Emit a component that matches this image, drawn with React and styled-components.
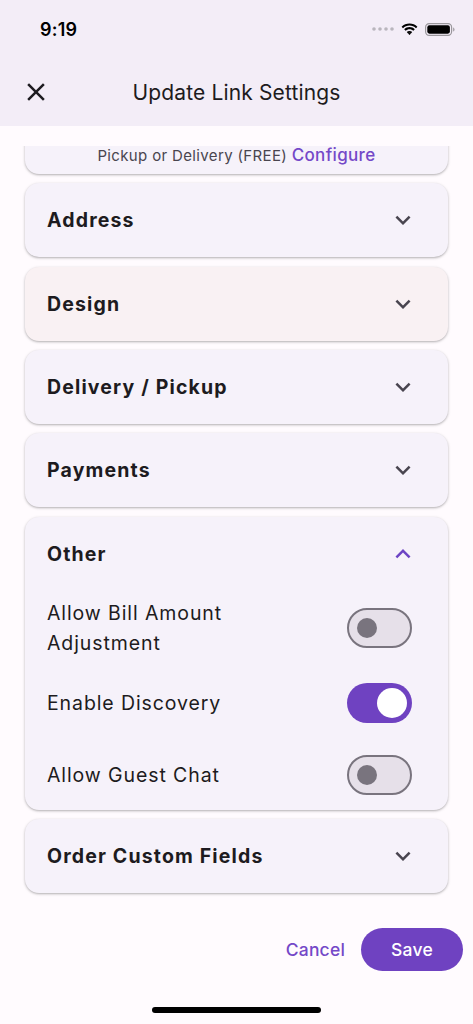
import React, { useState } from "react";
import styled, { createGlobalStyle } from "styled-components";

const GlobalStyle = createGlobalStyle`
  body {
    margin: 0;
    background: #fffbfe;
    font-family: Inter, "Noto Sans", sans-serif;
    color: #1d1b20;
  }
`;

const Screen = styled.div`
  width: 473px;
  height: 1024px;
  display: flex;
  flex-direction: column;
  overflow: hidden;
  background: #fffbfe;
`;

const Top = styled.header`
  background: #f3edf7;
`;

const StatusBar = styled.div`
  height: 58px;
  display: flex;
  align-items: center;
  justify-content: space-between;
  padding: 0 18px 0 40px;
`;

const Time = styled.span`
  font-size: 18px;
  font-weight: 600;
  letter-spacing: 0.2px;
  color: #000;
`;

const StatusIcons = styled.div`
  display: flex;
  align-items: center;
  gap: 7px;
`;

const AppBar = styled.div`
  height: 68px;
  display: flex;
  align-items: center;
  position: relative;
  padding-left: 21px;
`;

const IconButton = styled.button`
  width: 30px;
  height: 30px;
  padding: 0;
  border: 0;
  background: none;
  display: flex;
  align-items: center;
  justify-content: center;
  color: #1d1b20;
`;

const Title = styled.h1`
  position: absolute;
  left: 0;
  right: 0;
  margin: 0;
  text-align: center;
  font-size: 21px;
  font-weight: 400;
  letter-spacing: 0.15px;
  pointer-events: none;
`;

const Scroll = styled.div`
  margin-top: 20px;
  overflow: hidden;
  padding: 0 25px 4px;
`;

const List = styled.div`
  margin-top: -20px;
  display: flex;
  flex-direction: column;
  gap: 9.33px;
`;

const Card = styled.section`
  background: ${(p) => (p.$tint ? "#f9f1f3" : "#f6f2fa")};
  border-radius: 14px;
  box-shadow: 0 1px 2px rgba(0, 0, 0, 0.22), 0 1px 3px 1px rgba(0, 0, 0, 0.07);
`;

const PartialCard = styled(Card)`
  padding: 21px 22px 10px;
  text-align: center;
  font-size: 15px;
  line-height: 16px;
  letter-spacing: 0.35px;
  color: #49454f;
`;

const Link = styled.span`
  color: #7448c8;
  font-weight: 500;
  font-size: 17px;
`;

const CardHead = styled.div`
  height: 74px;
  display: flex;
  align-items: center;
  justify-content: space-between;
  padding: 0 30px 0 22px;
`;

const CardTitle = styled.h2`
  margin: 0;
  font-size: 19.5px;
  font-weight: 700;
  letter-spacing: 1.15px;
`;

const Chevron = styled.svg`
  width: 30px;
  height: 30px;
  fill: ${(p) => (p.$open ? "#6d44c4" : "#49454f")};
`;

const Body = styled.div`
  padding: 2px 36px 3px 22px;
`;

const Row = styled.div`
  height: ${(p) => p.$h}px;
  display: flex;
  align-items: center;
  justify-content: space-between;
`;

const RowLabel = styled.span`
  font-size: 19.5px;
  line-height: 30px;
  letter-spacing: 0.9px;
  color: #1d1b20;
  max-width: 200px;
`;

const Track = styled.button`
  width: 65px;
  height: 40px;
  box-sizing: border-box;
  border-radius: 20px;
  border: ${(p) => (p.$on ? "0" : "2.5px solid #79747e")};
  background: ${(p) => (p.$on ? "#6f42c1" : "#e6e0e9")};
  display: flex;
  align-items: center;
  justify-content: ${(p) => (p.$on ? "flex-end" : "flex-start")};
  padding: ${(p) => (p.$on ? "0 5px" : "0 7.5px")};
`;

const Thumb = styled.span`
  width: ${(p) => (p.$on ? 30 : 20)}px;
  height: ${(p) => (p.$on ? 30 : 20)}px;
  border-radius: 50%;
  background: ${(p) => (p.$on ? "#fff" : "#79747e")};
`;

const Footer = styled.div`
  padding: 31px 10px 0 0;
  display: flex;
  justify-content: flex-end;
  align-items: center;
  gap: 16px;
`;

const TextButton = styled.button`
  border: 0;
  background: none;
  padding: 0;
  font-family: inherit;
  font-size: 17.5px;
  font-weight: 500;
  letter-spacing: 0.2px;
  color: #7448c8;
`;

const FilledButton = styled.button`
  width: 102px;
  height: 43px;
  border: 0;
  border-radius: 22px;
  background: #6f42c1;
  color: #fff;
  font-family: inherit;
  font-size: 17.5px;
  font-weight: 500;
  letter-spacing: 0.2px;
`;

const HomeBar = styled.div`
  margin: 36px auto 0;
  width: 169px;
  height: 6px;
  border-radius: 3px;
  background: #000;
`;

const Switch = ({ on, onToggle }) => (
  <Track $on={on} onClick={onToggle}>
    <Thumb $on={on} />
  </Track>
);

const ExpandIcon = ({ open }) => (
  <Chevron viewBox="0 0 24 24" $open={open}>
    {open ? (
      <path d="M12 8l-6 6 1.41 1.41L12 10.83l4.59 4.58L18 14z" />
    ) : (
      <path d="M16.59 8.59L12 13.17 7.41 8.59 6 10l6 6 6-6z" />
    )}
  </Chevron>
);

const sections = [
  { title: "Address" },
  { title: "Design", tint: true },
  { title: "Delivery / Pickup" },
  { title: "Payments" },
];

const App = () => {
  const [toggles, setToggles] = useState({ bill: false, discovery: true, chat: false });

  function flip(key) {
    setToggles({ ...toggles, [key]: !toggles[key] });
  }

  return (
    <>
      <GlobalStyle />
      <Screen>
        <Top>
          <StatusBar>
            <Time>9:19</Time>
            <StatusIcons>
              <svg width="22" height="4" viewBox="0 0 22 4">
                {[2, 8, 14, 20].map((cx) => (
                  <circle key={cx} cx={cx} cy="2" r="1.8" fill="#b9b6bd" />
                ))}
              </svg>
              <svg width="17" height="13" viewBox="0 0 17 13">
                <path d="M8.5 2.6c2.5 0 4.8 1 6.5 2.6l1.4-1.5C14.3 1.7 11.5.5 8.5.5S2.7 1.7.6 3.7L2 5.2c1.7-1.6 4-2.6 6.5-2.6z" fill="#000" />
                <path d="M8.5 6.2c1.5 0 2.9.6 3.9 1.5l1.4-1.5C12.4 4.9 10.5 4.1 8.5 4.1S4.6 4.9 3.2 6.2l1.4 1.5c1-.9 2.4-1.5 3.9-1.5z" fill="#000" />
                <path d="M8.5 9.8c.6 0 1.1.2 1.5.6L8.5 12 7 10.4c.4-.4.9-.6 1.5-.6z" fill="#000" />
                <path d="M8.5 7.9c1.1 0 2 .4 2.7 1.1l-1.2 1.4c-.4-.4-.9-.6-1.5-.6s-1.1.2-1.5.6L5.8 9c.7-.7 1.6-1.1 2.7-1.1z" fill="#000" />
              </svg>
              <svg width="30" height="13" viewBox="0 0 30 13">
                <rect x="0.6" y="0.6" width="26" height="11.8" rx="3.6" fill="none" stroke="#9a979c" strokeWidth="1.2" />
                <rect x="2.3" y="2.3" width="22.6" height="8.4" rx="2.1" fill="#000" />
                <path d="M28.2 4.4c.8.3 1.3 1.1 1.3 2.1s-.5 1.8-1.3 2.1z" fill="#9a979c" />
              </svg>
            </StatusIcons>
          </StatusBar>
          <AppBar>
            <IconButton aria-label="Close">
              <svg width="30" height="30" viewBox="0 0 24 24" fill="currentColor">
                <path d="M19 6.41L17.59 5 12 10.59 6.41 5 5 6.41 10.59 12 5 17.59 6.41 19 12 13.41 17.59 19 19 17.59 13.41 12z" />
              </svg>
            </IconButton>
            <Title>Update Link Settings</Title>
          </AppBar>
        </Top>

        <Scroll>
          <List>
            <PartialCard>
              Pickup or Delivery (FREE) <Link>Configure</Link>
            </PartialCard>
            {sections.map((s) => (
              <Card key={s.title} $tint={s.tint}>
                <CardHead>
                  <CardTitle>{s.title}</CardTitle>
                  <ExpandIcon />
                </CardHead>
              </Card>
            ))}
            <Card>
              <CardHead>
                <CardTitle>Other</CardTitle>
                <ExpandIcon open />
              </CardHead>
              <Body>
                <Row $h={70}>
                  <RowLabel>Allow Bill Amount Adjustment</RowLabel>
                  <Switch on={toggles.bill} onToggle={() => flip("bill")} />
                </Row>
                <Row $h={80}>
                  <RowLabel>Enable Discovery</RowLabel>
                  <Switch on={toggles.discovery} onToggle={() => flip("discovery")} />
                </Row>
                <Row $h={64}>
                  <RowLabel>Allow Guest Chat</RowLabel>
                  <Switch on={toggles.chat} onToggle={() => flip("chat")} />
                </Row>
              </Body>
            </Card>
            <Card>
              <CardHead>
                <CardTitle>Order Custom Fields</CardTitle>
                <ExpandIcon />
              </CardHead>
            </Card>
          </List>
        </Scroll>

        <Footer>
          <TextButton>Cancel</TextButton>
          <FilledButton>Save</FilledButton>
        </Footer>
        <HomeBar />
      </Screen>
    </>
  );
};

export default App;
